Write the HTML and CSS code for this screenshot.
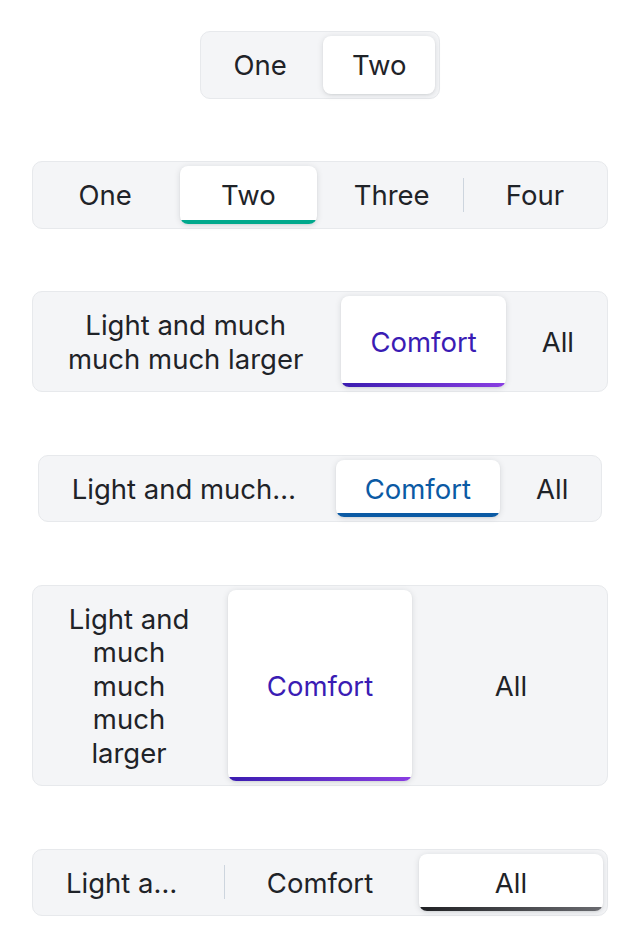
FILE: index.html
```html
<!DOCTYPE html>
<html lang="en">
<head>
<meta charset="utf-8">
<title>Segmented controls</title>
<link rel="stylesheet" href="styles.css">
</head>
<body>
<main class="page">
  <div class="seg seg--inline">
    <button class="seg-item">One</button>
    <span class="seg-sep seg-sep--hidden"></span>
    <button class="seg-item is-selected">Two</button>
  </div>

  <div class="seg seg--equal accent-teal">
    <button class="seg-item">One</button>
    <span class="seg-sep seg-sep--hidden"></span>
    <button class="seg-item is-selected">Two</button>
    <span class="seg-sep seg-sep--hidden"></span>
    <button class="seg-item">Three</button>
    <span class="seg-sep"></span>
    <button class="seg-item">Four</button>
  </div>

  <div class="seg accent-purple">
    <button class="seg-item seg-item--grow">Light and much much much larger</button>
    <span class="seg-sep seg-sep--hidden"></span>
    <button class="seg-item is-selected">Comfort</button>
    <span class="seg-sep seg-sep--hidden"></span>
    <button class="seg-item">All</button>
  </div>

  <div class="seg seg--inline accent-blue">
    <button class="seg-item"><span class="truncate truncate--wide">Light and much much much larger</span></button>
    <span class="seg-sep seg-sep--hidden"></span>
    <button class="seg-item is-selected">Comfort</button>
    <span class="seg-sep seg-sep--hidden"></span>
    <button class="seg-item">All</button>
  </div>

  <div class="seg seg--equal accent-purple">
    <button class="seg-item">Light and much much much larger</button>
    <span class="seg-sep seg-sep--hidden"></span>
    <button class="seg-item is-selected">Comfort</button>
    <span class="seg-sep seg-sep--hidden"></span>
    <button class="seg-item">All</button>
  </div>

  <div class="seg seg--equal accent-dark">
    <button class="seg-item"><span class="truncate">Light and much much much larger</span></button>
    <span class="seg-sep"></span>
    <button class="seg-item">Comfort</button>
    <span class="seg-sep seg-sep--hidden"></span>
    <button class="seg-item is-selected">All</button>
  </div>
</main>
</body>
</html>
```

FILE: styles.css
```css
* { box-sizing: border-box; }

html, body {
  margin: 0;
  background: #ffffff;
}

body {
  font-family: Inter, "Noto Sans", "Liberation Sans", sans-serif;
  color: #1f2328;
}

.page {
  display: flex;
  flex-direction: column;
  align-items: stretch;
  gap: 62.5px;
  padding: 31px 32px;
}

.seg {
  display: flex;
  align-items: stretch;
  padding: 4px;
  background: #f4f5f7;
  border: 1px solid #e7e9ec;
  border-radius: 10px;
}

.seg--inline {
  align-self: center;
}

.seg-item {
  position: relative;
  flex: 0 0 auto;
  display: flex;
  align-items: center;
  justify-content: center;
  padding: 13px 29px 11px;
  margin: 0;
  border: 0;
  border-radius: 8px;
  background: transparent;
  font: inherit;
  font-size: 27.5px;
  line-height: 33.5px;
  color: #1f2328;
  text-align: center;
  overflow: hidden;
}

.seg-item--grow {
  flex: 1 1 auto;
  min-width: 0;
}

.seg--equal .seg-item {
  flex: 1 1 0;
  min-width: 0;
}

.seg-item.is-selected {
  background: #ffffff;
  box-shadow: 0 1px 6px rgba(20, 28, 40, 0.13), 0 1px 2px rgba(20, 28, 40, 0.06);
}

.seg-item.is-selected::after {
  content: "";
  position: absolute;
  left: 0;
  right: 0;
  bottom: 0;
  height: 4px;
}

.accent-teal .is-selected::after { background: #00a88c; }

.accent-purple .is-selected { color: #3a1cb4; }
.accent-purple .is-selected::after { background: linear-gradient(90deg, #3a1cb0, #8a3ee2); }

.accent-blue .is-selected { color: #0b5aa4; }
.accent-blue .is-selected::after { background: #0b5aa4; }

.accent-dark .is-selected::after { background: linear-gradient(90deg, #202124, #6a6b70); }

.seg-sep {
  flex: 0 0 7px;
  align-self: center;
  height: 34px;
  background: linear-gradient(#cdd5de, #cdd5de) center / 1px 100% no-repeat;
}

.seg-sep--hidden {
  background: none;
}

.truncate {
  display: block;
  min-width: 0;
  max-width: 100%;
  white-space: nowrap;
  overflow: hidden;
  text-overflow: ellipsis;
}

.truncate--wide {
  width: 228px;
}
```
